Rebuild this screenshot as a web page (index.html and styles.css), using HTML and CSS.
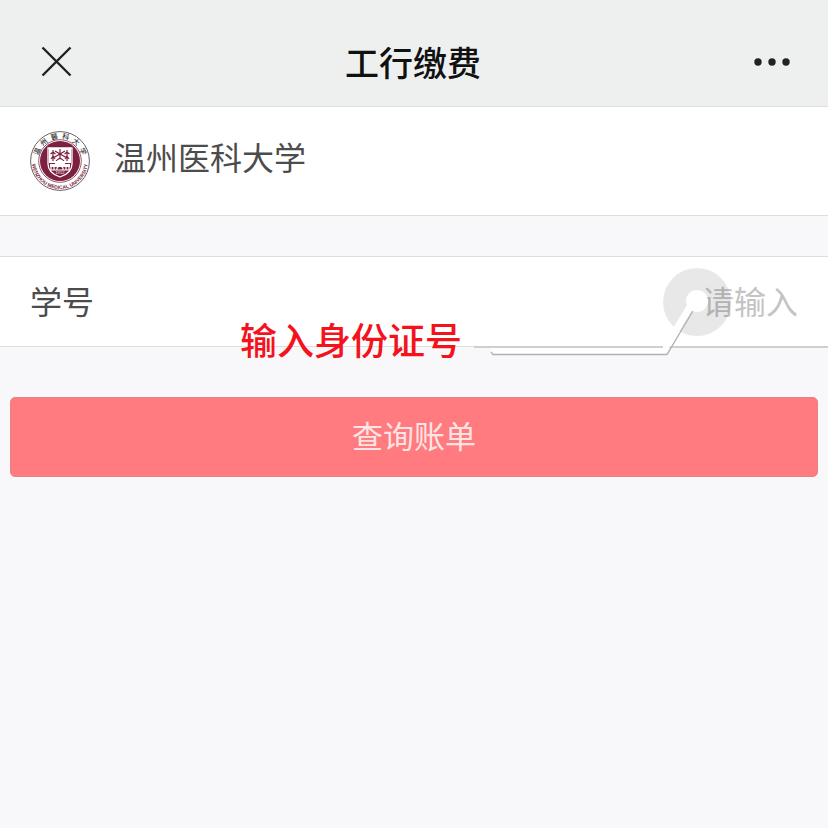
FILE: index.html
```html
<!DOCTYPE html>
<html lang="zh-CN">
<head>
<meta charset="utf-8">
<meta name="viewport" content="width=device-width, initial-scale=1">
<title>工行缴费</title>
<link rel="stylesheet" href="styles.css">
</head>
<body>
<header class="topbar">
  <button class="icon-button" type="button" aria-label="关闭">
    <svg width="32" height="32" viewBox="0 0 32 32"><path d="M2.500 1.500 30.500 29.500M30.500 1.500 2.500 29.500" fill="none" stroke="#222" stroke-width="2.400"/></svg>
  </button>
  <h1 class="title">工行缴费</h1>
  <button class="icon-button" type="button" aria-label="更多">
    <svg width="36" height="32" viewBox="0 0 36 32" fill="#222"><circle cx="4" cy="16" r="3.700"/><circle cx="18" cy="16" r="3.700"/><circle cx="32" cy="16" r="3.700"/></svg>
  </button>
</header>
<main>
  <section class="school">
    <svg class="crest" viewBox="0 0 60 60" aria-hidden="true">
      <defs>
        <path id="arc-top" d="M9.300 38.500A22.400 22.400 0 1 1 50.700 38.500"/>
        <path id="arc-bottom" d="M2 30A28 28 0 0 0 58 30"/>
      </defs>
      <circle cx="30" cy="30" r="29.400" fill="#fff" stroke="#6b6065" stroke-width="1"/>
      <circle cx="30" cy="30" r="21.300" fill="#fff" stroke="#7b2a45" stroke-width=".8"/>
      <circle cx="30" cy="30" r="20" fill="#7d1f3f"/>
      <path d="M18 17H42V33Q42 42 30 46Q18 42 18 33Z" fill="#7d1f3f" stroke="#fff" stroke-width="1.300"/>
      <path d="M19 17H41V32H19Z" fill="#fff"/>
      <g fill="none" stroke="#7d1f3f" stroke-width="1.200">
        <path d="M30 18V32M25 20 30 23 35 20M23 27 30 23 37 27M26 30 30 27 34 30M23 19V30M37 19V30M20.500 23 23 21 25.500 23M34.500 23 37 21 39.500 23M21 28 23 25 25 28M35 28 37 25 39 28"/>
      </g>
      <path d="M20 36V33H25V31L30 28 35 31V33H40V36Z" fill="#fff"/>
      <g fill="none" stroke="#fff" stroke-width="1.200"><path d="M21 36V39M24 36V39M27 39V37Q30 33 33 37V39M36 36V39M39 36V39M20 39H40"/></g>
      <text class="crest-year" x="30" y="43" text-anchor="middle">1912</text>
      <text class="crest-cn"><textPath href="#arc-top" startOffset="50%" text-anchor="middle">温&#8194;州&#8194;醫&#8194;科&#8194;大&#8194;学</textPath></text>
      <text class="crest-en"><textPath href="#arc-bottom" startOffset="50%" text-anchor="middle">WENZHOU MEDICAL UNIVERSITY</textPath></text>
    </svg>
    <h2 class="school-name">温州医科大学</h2>
  </section>
  <form class="bill-form">
    <div class="field">
      <label class="field-label" for="student-id">学号</label>
      <input class="field-input" id="student-id" type="text" placeholder="请输入">
      <svg class="pointer" width="358" height="100" viewBox="0 0 358 100" aria-hidden="true">
        <path d="M4 87H358" stroke="#cfcfcf" stroke-width="2"/>
        <circle cx="227" cy="42" r="34" fill="#000" fill-opacity=".09"/>
        <path d="M21 91H193L223 42" fill="none" stroke="#fff" stroke-width="7"/>
        <path d="M21 92 23 94.500H197L227 44" fill="none" stroke="#b0b0b0" stroke-width="1.300"/>
        <circle cx="227" cy="41" r="11" fill="#fff"/>
        <path d="M4 87H193" stroke="#cfcfcf" stroke-width="2"/>
      </svg>
      <span class="hint">输入身份证号</span>
    </div>
    <button class="submit" type="submit">查询账单</button>
  </form>
</main>
</body>
</html>
```
FILE: styles.css
```css
* {
  box-sizing: border-box;
}

body {
  margin: 0;
  min-height: 100vh;
  background: #f8f8fb;
  color: #4c4c4c;
  font-family: "Noto Sans CJK SC", sans-serif;
  font-size: 32px;
  line-height: 48px;
}

button,
input {
  font: inherit;
}

.topbar {
  display: flex;
  align-items: center;
  justify-content: space-between;
  padding: 38px 38px 20px 40px;
  background: #eef0f0;
  border-bottom: 1px solid #dedede;
}

.icon-button {
  display: flex;
  padding: 0;
  border: 0;
  background: none;
}

.title {
  margin: 0;
  color: #111;
  font-size: 34px;
  font-weight: 500;
}

.school {
  display: flex;
  align-items: flex-start;
  gap: 24px;
  padding: 24px 30px;
  background: #fff;
  border-bottom: 1px solid #dedede;
}

.crest {
  flex: none;
  width: 60px;
  height: 60px;
}

.crest-cn {
  fill: #333;
  font-size: 7px;
  font-weight: 500;
}

.crest-en {
  fill: #7d1f3f;
  font-family: "Liberation Sans", sans-serif;
  font-size: 5px;
  font-weight: 700;
}

.crest-year {
  fill: #fff;
  font-family: "Liberation Sans", sans-serif;
  font-size: 4px;
}

.school-name {
  margin: 0;
  font-size: 32px;
  font-weight: 400;
  line-height: 50px;
}

.bill-form {
  margin-top: 40px;
}

.field {
  position: relative;
  display: flex;
  align-items: center;
  gap: 32px;
  padding: 19px 30px 22px;
  background: #fff;
  border-top: 1px solid #dedede;
  border-bottom: 1px solid #dedede;
}

.field-input {
  flex: 1;
  min-width: 0;
  height: 48px;
  padding: 0;
  border: 0;
  outline: 0;
  background: none;
  color: #4c4c4c;
  text-align: right;
}

.field-input::placeholder {
  color: #c4c4c4;
  opacity: 1;
}

.pointer {
  position: absolute;
  top: 3px;
  right: 0;
  pointer-events: none;
}

.hint {
  position: absolute;
  top: 58px;
  right: 366px;
  color: #f4121c;
  font-size: 37px;
  font-weight: 500;
  white-space: nowrap;
}

.submit {
  display: block;
  width: calc(100% - 20px);
  margin: 50px 10px 0;
  padding: 13px 16px 17px;
  border: 1px solid #e58487;
  border-radius: 5px;
  background: #ff7b7f;
  color: #ffe4e4;
  font-size: 31px;
  font-weight: 400;
}
```
